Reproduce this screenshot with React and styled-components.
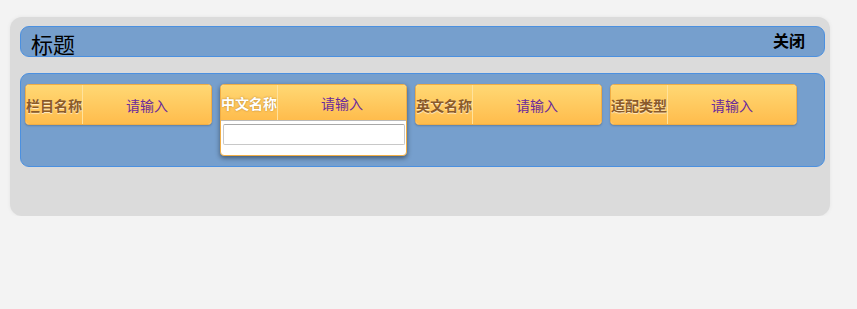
import React from "react";
import styled, { createGlobalStyle } from "styled-components";

const GlobalStyle = createGlobalStyle`
  body {
    margin: 0;
    background: #f3f3f3;
    font-family: "Microsoft YaHei", "Noto Sans CJK SC", "Liberation Sans", sans-serif;
  }
`;

const Page = styled.div`
  padding: 17px 0 0 10px;
`;

const Panel = styled.div`
  width: 805px;
  height: 190px;
  padding: 9px 5px 0 10px;
  background: #dbdbdb;
  border-radius: 12px;
  box-shadow: 0 0 4px rgba(0, 0, 0, 0.06);
`;

const TitleBar = styled.div`
  display: flex;
  align-items: center;
  justify-content: space-between;
  height: 29px;
  padding: 0 19px 0 10px;
  background: #769fcd;
  border: 1px solid #4b90e0;
  border-radius: 9px;
`;

const Title = styled.span`
  font-size: 22px;
  color: #000;
  padding-top: 3px;
`;

const Close = styled.span`
  font-size: 16px;
  font-weight: bold;
  color: #000;
  cursor: pointer;
  margin-top: -4px;
`;

const Content = styled.div`
  margin-top: 16px;
  height: 82px;
  padding: 10px 4px 0;
  background: #769fcd;
  border: 1px solid #4b90e0;
  border-radius: 9px;
  display: flex;
  align-items: flex-start;
  gap: 8px;
`;

const Field = styled.div`
  width: 185px;
  border: 1px solid #f0ae45;
  border-radius: 4px;
  background: #fff;
  box-shadow: ${(p) =>
    p.$open ? "0 2px 5px rgba(0, 0, 0, 0.45)" : "0 1px 2px rgba(0, 0, 0, 0.2)"};
  overflow: hidden;
`;

const Head = styled.div`
  display: flex;
  height: ${(p) => (p.$open ? "35px" : "39px")};
  background: linear-gradient(#ffd874, #ffbc4c);
`;

const Label = styled.div`
  width: 56px;
  display: flex;
  align-items: center;
  justify-content: flex-start;
  border-right: 1px solid #ffe29c;
  font-size: 14px;
  font-weight: bold;
  white-space: nowrap;
  overflow: hidden;
  color: ${(p) => (p.$open ? "#fff" : "#8a5a2a")};
  text-shadow: ${(p) =>
    p.$open ? "0 0 2px rgba(120, 70, 0, 0.6)" : "0 1px 1px rgba(255, 255, 255, 0.7)"};
`;

const Placeholder = styled.div`
  flex: 1;
  display: flex;
  align-items: center;
  justify-content: center;
  font-size: 14px;
  color: #6a2a9c;
`;

const Dropdown = styled.div`
  padding: 3px 1px 10px 2px;
  border-top: 1px solid #b9b9b9;
`;

const Input = styled.input`
  display: block;
  box-sizing: border-box;
  width: 100%;
  height: 21px;
  border: 1px solid #c8c8c8;
  border-top-color: #a8a8a8;
  border-radius: 2px;
  outline: none;
  background: #fff;
`;

const fields = [
  { label: "栏目名称" },
  { label: "中文名称", open: true },
  { label: "英文名称" },
  { label: "适配类型" },
];

export default function App() {
  return (
    <>
      <GlobalStyle />
      <Page>
        <Panel>
          <TitleBar>
            <Title>标题</Title>
            <Close>关闭</Close>
          </TitleBar>
          <Content>
            {fields.map((f) => (
              <Field key={f.label} $open={f.open}>
                <Head $open={f.open}>
                  <Label $open={f.open}>{f.label}</Label>
                  <Placeholder>请输入</Placeholder>
                </Head>
                {f.open && (
                  <Dropdown>
                    <Input />
                  </Dropdown>
                )}
              </Field>
            ))}
          </Content>
        </Panel>
      </Page>
    </>
  );
}
